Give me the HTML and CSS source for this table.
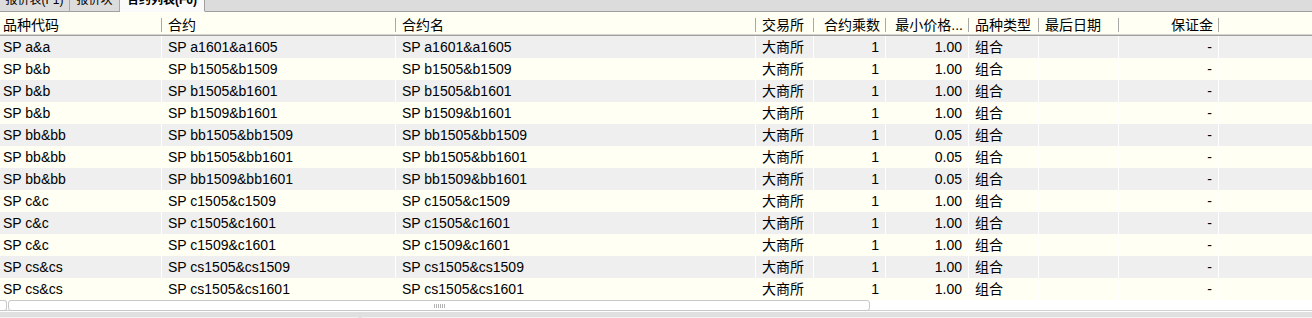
FILE: index.html
```html
<!DOCTYPE html>
<html lang="zh-CN">
<head>
<meta charset="utf-8">
<title>合约列表</title>
<link rel="stylesheet" href="styles.css">
</head>
<body>
<div class="app">
  <div class="tabbar">
    <div class="tab tab-first"><span>报价表(F1)</span></div>
    <div class="tab tab-second"><span>报价块</span></div>
    <div class="tab tab-active"><span>合约列表(F6)</span></div>
    <div class="tab-rest"></div>
  </div>

  <div class="grid">
    <div class="row head">
      <div class="c c1">品种代码</div>
      <div class="c">合约</div>
      <div class="c">合约名</div>
      <div class="c">交易所</div>
      <div class="c r">合约乘数</div>
      <div class="c r" title="最小价格变动">最小价格...</div>
      <div class="c">品种类型</div>
      <div class="c">最后日期</div>
      <div class="c r">保证金</div>
      <div class="c last"></div>
    </div>

    <div class="row odd"><div class="c c1">SP a&amp;a</div><div class="c">SP a1601&amp;a1605</div><div class="c">SP a1601&amp;a1605</div><div class="c">大商所</div><div class="c r">1</div><div class="c r">1.00</div><div class="c">组合</div><div class="c"></div><div class="c r">-</div><div class="c last"></div></div>
    <div class="row even"><div class="c c1">SP b&amp;b</div><div class="c">SP b1505&amp;b1509</div><div class="c">SP b1505&amp;b1509</div><div class="c">大商所</div><div class="c r">1</div><div class="c r">1.00</div><div class="c">组合</div><div class="c"></div><div class="c r">-</div><div class="c last"></div></div>
    <div class="row odd"><div class="c c1">SP b&amp;b</div><div class="c">SP b1505&amp;b1601</div><div class="c">SP b1505&amp;b1601</div><div class="c">大商所</div><div class="c r">1</div><div class="c r">1.00</div><div class="c">组合</div><div class="c"></div><div class="c r">-</div><div class="c last"></div></div>
    <div class="row even"><div class="c c1">SP b&amp;b</div><div class="c">SP b1509&amp;b1601</div><div class="c">SP b1509&amp;b1601</div><div class="c">大商所</div><div class="c r">1</div><div class="c r">1.00</div><div class="c">组合</div><div class="c"></div><div class="c r">-</div><div class="c last"></div></div>
    <div class="row odd"><div class="c c1">SP bb&amp;bb</div><div class="c">SP bb1505&amp;bb1509</div><div class="c">SP bb1505&amp;bb1509</div><div class="c">大商所</div><div class="c r">1</div><div class="c r">0.05</div><div class="c">组合</div><div class="c"></div><div class="c r">-</div><div class="c last"></div></div>
    <div class="row even"><div class="c c1">SP bb&amp;bb</div><div class="c">SP bb1505&amp;bb1601</div><div class="c">SP bb1505&amp;bb1601</div><div class="c">大商所</div><div class="c r">1</div><div class="c r">0.05</div><div class="c">组合</div><div class="c"></div><div class="c r">-</div><div class="c last"></div></div>
    <div class="row odd"><div class="c c1">SP bb&amp;bb</div><div class="c">SP bb1509&amp;bb1601</div><div class="c">SP bb1509&amp;bb1601</div><div class="c">大商所</div><div class="c r">1</div><div class="c r">0.05</div><div class="c">组合</div><div class="c"></div><div class="c r">-</div><div class="c last"></div></div>
    <div class="row even"><div class="c c1">SP c&amp;c</div><div class="c">SP c1505&amp;c1509</div><div class="c">SP c1505&amp;c1509</div><div class="c">大商所</div><div class="c r">1</div><div class="c r">1.00</div><div class="c">组合</div><div class="c"></div><div class="c r">-</div><div class="c last"></div></div>
    <div class="row odd"><div class="c c1">SP c&amp;c</div><div class="c">SP c1505&amp;c1601</div><div class="c">SP c1505&amp;c1601</div><div class="c">大商所</div><div class="c r">1</div><div class="c r">1.00</div><div class="c">组合</div><div class="c"></div><div class="c r">-</div><div class="c last"></div></div>
    <div class="row even"><div class="c c1">SP c&amp;c</div><div class="c">SP c1509&amp;c1601</div><div class="c">SP c1509&amp;c1601</div><div class="c">大商所</div><div class="c r">1</div><div class="c r">1.00</div><div class="c">组合</div><div class="c"></div><div class="c r">-</div><div class="c last"></div></div>
    <div class="row odd"><div class="c c1">SP cs&amp;cs</div><div class="c">SP cs1505&amp;cs1509</div><div class="c">SP cs1505&amp;cs1509</div><div class="c">大商所</div><div class="c r">1</div><div class="c r">1.00</div><div class="c">组合</div><div class="c"></div><div class="c r">-</div><div class="c last"></div></div>
    <div class="row even"><div class="c c1">SP cs&amp;cs</div><div class="c">SP cs1505&amp;cs1601</div><div class="c">SP cs1505&amp;cs1601</div><div class="c">大商所</div><div class="c r">1</div><div class="c r">1.00</div><div class="c">组合</div><div class="c"></div><div class="c r">-</div><div class="c last"></div></div>
  </div>

  <div class="hscroll">
    <div class="hs-btn"></div>
    <div class="hs-thumb"><span class="grip"></span></div>
    <div class="hs-track"></div>
  </div>

  <div class="bottom">
    <div class="band"></div>
    <div class="status">
      <div class="panel p1"></div>
      <div class="panel p2"></div>
    </div>
  </div>
</div>
</body>
</html>
```

FILE: styles.css
```css
* { box-sizing: border-box; }

html, body {
  margin: 0;
  padding: 0;
  background: #ffffff;
}

body {
  font-family: "Liberation Sans", "Noto Sans CJK SC", sans-serif;
  font-size: 14px;
  color: #000;
  width: 1312px;
  height: 318px;
  overflow: hidden;
}

.app {
  display: flex;
  flex-direction: column;
  width: 1312px;
}

/* ---------- tab bar ---------- */
.tabbar {
  display: flex;
  height: 12px;
  background: #dcdcdc;
  font-size: 12px;
}

.tab {
  height: 12px;
  overflow: hidden;
  display: flex;
  align-items: flex-end;
  justify-content: center;
  padding-bottom: 4px;
  border-bottom: 1px solid #a0a0a0;
  white-space: nowrap;
}

.tab span {
  line-height: 14px;
  color: #000;
}

.tab-first {
  width: 70px;
  border-right: 1px solid #a8a8a8;
}

.tab-second {
  width: 50px;
  border-right: 1px solid #a8a8a8;
}

.tab-active {
  width: 85px;
  background: #fafafa;
  border-right: 1px solid #a0a0a0;
  border-bottom-color: #fafafa;
  font-weight: bold;
}

.tab-rest {
  flex: 1;
  border-bottom: 1px solid #a0a0a0;
}

/* ---------- grid ---------- */
.grid {
  display: flex;
  flex-direction: column;
}

.row {
  display: grid;
  grid-template-columns: 162px 234px 360px 58px 72px 83px 70px 80px 100px 1fr;
  height: 22px;
  line-height: 22px;
  white-space: nowrap;
}

.row.odd { background: #efefef; }
.row.even { background: #fffff4; }

.c {
  padding: 0 6px;
  overflow: hidden;
  border-right: 1px solid #ffffff;
}

.c.c1 { padding-left: 3px; }
.c.r { text-align: right; }
.c.last { border-right: 0; }

.row.head {
  height: 24px;
  background: #fffff4;
  border-bottom: 1px solid #a0a0a0;
  box-shadow: inset 0 -1px 0 #d4d4d0;
  line-height: 18px;
}

.row.head .c {
  padding-top: 4px;
  border-right: 0;
  background-image: linear-gradient(#a8a8a8, #a8a8a8);
  background-size: 1px 14px;
  background-position: right 6px;
  background-repeat: no-repeat;
}

.row.head .c.last { background-image: none; }

/* ---------- horizontal scrollbar ---------- */
.hscroll {
  display: flex;
  height: 11px;
  background: #ffffff;
  border-bottom: 1px solid #d0d0d0;
}

.hs-btn {
  width: 7px;
  height: 11px;
  border: 1px solid #c8c8c8;
  border-left: 0;
  border-radius: 0 3px 3px 0;
  margin-right: 1px;
}

.hs-thumb {
  width: 862px;
  height: 11px;
  border: 1px solid #c8c8c8;
  border-radius: 3px;
  display: flex;
  align-items: center;
  justify-content: center;
  background: #ffffff;
}

.grip {
  width: 11px;
  height: 4px;
  background-image: repeating-linear-gradient(to right, #b4b4b4 0, #b4b4b4 1px, transparent 1px, transparent 2px);
}

.hs-track { flex: 1; }

/* ---------- bottom area ---------- */
.bottom {
  display: flex;
  flex-direction: column;
}

.band {
  height: 6px;
  background: #e0e0e0;
  border-top: 1px solid #ffffff;
}

.status {
  display: flex;
  gap: 4px;
  height: 2px;
  background: #e0e0e0;
}

.panel {
  background: #f2f2f2;
}

.p1 { width: 358px; }
.p2 { flex: 1; }
```
